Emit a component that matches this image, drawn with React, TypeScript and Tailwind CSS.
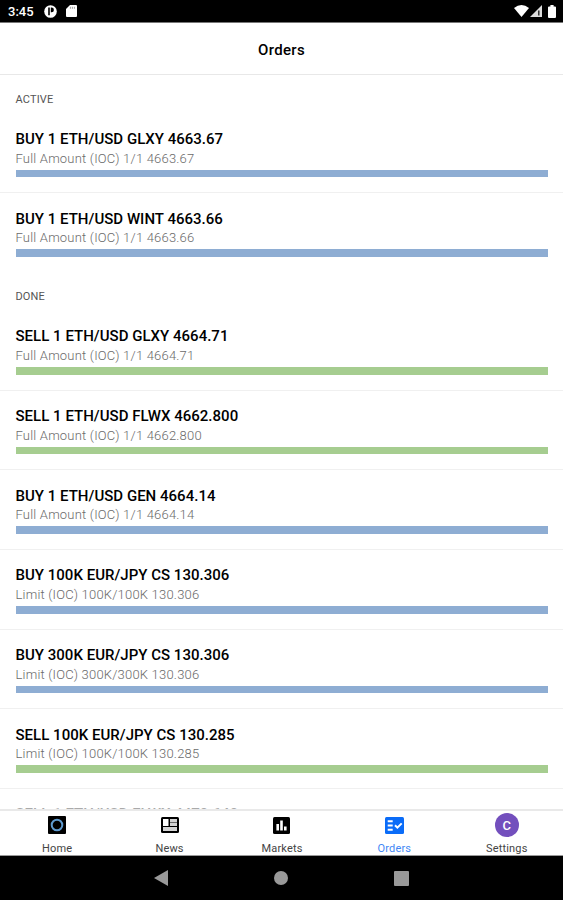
import React from 'react';
import clsx from 'clsx';

interface Order {
  side: 'BUY' | 'SELL';
  title: string;
  detail: string;
}

const activeOrders: Order[] = [
  { side: 'BUY', title: '1 ETH/USD GLXY 4663.67', detail: 'Full Amount (IOC) 1/1 4663.67' },
  { side: 'BUY', title: '1 ETH/USD WINT 4663.66', detail: 'Full Amount (IOC) 1/1 4663.66' },
];

const doneOrders: Order[] = [
  { side: 'SELL', title: '1 ETH/USD GLXY 4664.71', detail: 'Full Amount (IOC) 1/1 4664.71' },
  { side: 'SELL', title: '1 ETH/USD FLWX 4662.800', detail: 'Full Amount (IOC) 1/1 4662.800' },
  { side: 'BUY', title: '1 ETH/USD GEN 4664.14', detail: 'Full Amount (IOC) 1/1 4664.14' },
  { side: 'BUY', title: '100K EUR/JPY CS 130.306', detail: 'Limit (IOC) 100K/100K 130.306' },
  { side: 'BUY', title: '300K EUR/JPY CS 130.306', detail: 'Limit (IOC) 300K/300K 130.306' },
  { side: 'SELL', title: '100K EUR/JPY CS 130.285', detail: 'Limit (IOC) 100K/100K 130.285' },
  { side: 'SELL', title: '1 ETH/USD FLWX 4470.640', detail: 'Full Amount (IOC) 1/1 4470.640' },
];

function StatusBar() {
  return (
    <div className="flex h-[23px] shrink-0 items-center border-b border-[#777] bg-black pl-2 pr-[7px] text-white">
      <span className="w-[27px] pt-px text-[13px] font-medium leading-none">3:45</span>
      <svg className="ml-[9px]" width="13" height="13" viewBox="0 0 13 13">
        <circle cx="6.5" cy="6.5" r="6.3" fill="#fff" />
        <path d="M4.2 2.6h1.6v7.600H4.2zM6.8 2.600h.8a2.300 2.300 0 0 1 0 4.600h-.8z" fill="#000" />
      </svg>
      <svg className="ml-[9px]" width="11" height="12" viewBox="0 0 11 12">
        <path d="M4 0h6q1 0 1 1v10q0 1-1 1H1q-1 0-1-1V4z" fill="#fff" />
        <path d="M4.4 1.8v2M6.4 1.8v2M8.4 1.8v2" stroke="#888" strokeWidth="0.8" />
      </svg>
      <svg className="ml-auto" width="15" height="12" viewBox="0 0 15 12">
        <path d="M0 3Q7.5-3 15 3L7.5 12z" fill="#fff" />
      </svg>
      <svg className="ml-[1px]" width="12" height="12" viewBox="0 0 12 12">
        <path d="M0 12 12 0v12z" fill="#ddd" />
        <path d="M8.800 5.500v5" stroke="#222" strokeWidth="1.4" />
      </svg>
      <svg className="ml-[6px]" width="8" height="13" viewBox="0 0 8 13">
        <path d="M2.4 0h3.2v1.4H7q1 0 1 1V12q0 1-1 1H1q-1 0-1-1V2.4q0-1 1-1h1.4z" fill="#fff" />
      </svg>
    </div>
  );
}

function SectionTitle({ children }: { children: React.ReactNode }) {
  return (
    <h2 className="flex h-[38px] items-center px-[15.5px] pt-[9px] text-[11px] leading-none tracking-[0.15px] text-[#555]">
      {children}
    </h2>
  );
}

function OrderRow({ order, last, faded }: { order: Order; last: boolean; faded: boolean }) {
  return (
    <li className={clsx('h-[79.65px] border-b px-[15.5px] pt-[16.5px]', last ? 'border-transparent' : 'border-[#f0f0f0]')}>
      <p
        className={clsx(
          'h-[19px] text-[15px] font-medium leading-[19px] tracking-[0.02px]',
          faded ? 'text-[#aaa]' : 'text-black'
        )}
      >
        {order.side} {order.title}
      </p>
      <p className="mt-[0.5px] h-[17px] text-[13px] font-light leading-[17px] tracking-[0.2px] text-[#6a6a6a]">
        {order.detail}
      </p>
      <div className={clsx('mt-[3px] h-[7.7px]', order.side === 'BUY' ? 'bg-[#8eadd3]' : 'bg-[#a6cd90]')} />
    </li>
  );
}

function OrderSection({ title, orders, fadeLast = false }: { title: string; orders: Order[]; fadeLast?: boolean }) {
  return (
    <section>
      <SectionTitle>{title}</SectionTitle>
      <ul>
        {orders.map((order, i) => {
          const last = i === orders.length - 1;
          return <OrderRow key={order.title} order={order} last={last} faded={fadeLast && last} />;
        })}
      </ul>
    </section>
  );
}

function HomeIcon() {
  return (
    <svg width="18" height="18" viewBox="0 0 18 18">
      <rect width="18" height="18" rx="1" fill="#000" />
      <circle cx="9" cy="9" r="5.3" fill="none" stroke="#5f9bd0" strokeWidth="2" />
    </svg>
  );
}

function NewsIcon() {
  return (
    <svg width="18" height="16" viewBox="0 0 18 16">
      <rect width="18" height="16" rx="1.5" fill="#000" />
      <path d="M2 2h5.500v7H2z" fill="#fff" />
      <path d="M9 2h7v3.500H9zM9 6h7v3H9zM2 10h14v4H2z" fill="#d4d4d4" />
    </svg>
  );
}

function MarketsIcon() {
  return (
    <svg width="17" height="17" viewBox="0 0 17 17">
      <rect width="17" height="17" rx="1.5" fill="#000" />
      <path d="M3.400 7h2.600v6.500H3.400zM7.200 3.500h2.600v10H7.200zM11 9.500h2.600v4H11z" fill="#fff" />
    </svg>
  );
}

function OrdersIcon() {
  return (
    <svg width="19" height="17" viewBox="0 0 19 17">
      <rect width="19" height="17" rx="1.5" fill="#0a6cf8" />
      <path d="M2.700 4.300h5M2.700 8.500h5M2.700 12.700h5" stroke="#fff" strokeWidth="1.9" />
      <path d="m10 8.300 2.400 2.400 4.300-4.300" fill="none" stroke="#fff" strokeWidth="2" />
    </svg>
  );
}

function Avatar() {
  return (
    <span className="flex size-6 items-center justify-center rounded-full bg-[#734fbd] text-[13px] font-medium leading-none text-white">
      C
    </span>
  );
}

const tabs = [
  { label: 'Home', icon: <HomeIcon /> },
  { label: 'News', icon: <NewsIcon /> },
  { label: 'Markets', icon: <MarketsIcon /> },
  { label: 'Orders', icon: <OrdersIcon />, active: true },
  { label: 'Settings', icon: <Avatar /> },
];

function TabBar() {
  return (
    <nav className="grid h-[47px] shrink-0 grid-cols-5 border-b border-t-2 border-b-[#999] border-t-[#e9e9e9] bg-white pl-px">
      {tabs.map((tab) => (
        <button key={tab.label} className="flex flex-col items-center pt-[2px]">
          <span className="flex h-6 items-center justify-center">{tab.icon}</span>
          <span className={clsx('mt-[5px] text-[11px] leading-[13px] tracking-[0.15px]', tab.active ? 'text-[#4287f5]' : 'text-[#444]')}>
            {tab.label}
          </span>
        </button>
      ))}
    </nav>
  );
}

function SystemNav() {
  return (
    <div className="flex h-11 shrink-0 items-center justify-center gap-[106px] bg-black">
      <svg width="14" height="16" viewBox="0 0 14 16">
        <path d="M0 8 14 0v16z" fill="#999" />
      </svg>
      <span className="size-[14px] rounded-full bg-[#999]" />
      <span className="size-[15px] rounded-[1px] bg-[#999]" />
    </div>
  );
}

export default function App() {
  return (
    <div className="flex h-[900px] w-[563px] flex-col overflow-hidden bg-white font-['Roboto',sans-serif]">
      <StatusBar />
      <header className="flex h-[52px] shrink-0 items-center justify-center border-b border-[#e8e8e8] pt-[3px]">
        <h1 className="text-[15px] font-medium tracking-[0.3px] text-black">Orders</h1>
      </header>
      <main className="min-h-0 flex-1 overflow-hidden pt-[0.7px]">
        <OrderSection title="ACTIVE" orders={activeOrders} />
        <OrderSection title="DONE" orders={doneOrders} fadeLast />
      </main>
      <TabBar />
      <SystemNav />
    </div>
  );
}
